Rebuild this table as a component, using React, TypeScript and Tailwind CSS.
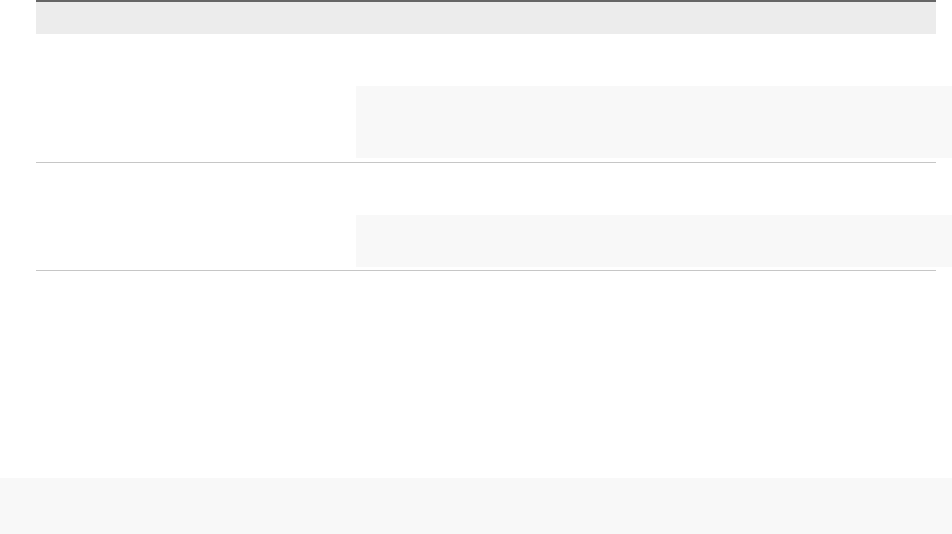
export default function App() {
  return (
    <div className="w-[952px] h-[534px] bg-white flex flex-col overflow-hidden" style={{ fontFamily: '"Liberation Sans", Arial, sans-serif' }}>
      <div className="ml-[36px] w-[900px] h-[34px] border-t-2 border-[#666666] bg-[#ececec]" />
      <div className="ml-[36px] w-[900px] flex border-b border-[#c6c6c6]">
        <div className="w-[320px] shrink-0" />
        <div className="flex-1 pt-[52px] pb-[4px]">
          <div className="h-[72px] mr-[-16px] bg-[#f8f8f8]" />
        </div>
      </div>
      <div className="ml-[36px] w-[900px] flex border-b border-[#c6c6c6]">
        <div className="w-[320px] shrink-0" />
        <div className="flex-1 pt-[52px] pb-[3px]">
          <div className="h-[52px] mr-[-16px] bg-[#f8f8f8]" />
        </div>
      </div>
      <div className="flex-1" />
      <div className="h-[56px] bg-[#f8f8f8]" />
    </div>
  );
}
